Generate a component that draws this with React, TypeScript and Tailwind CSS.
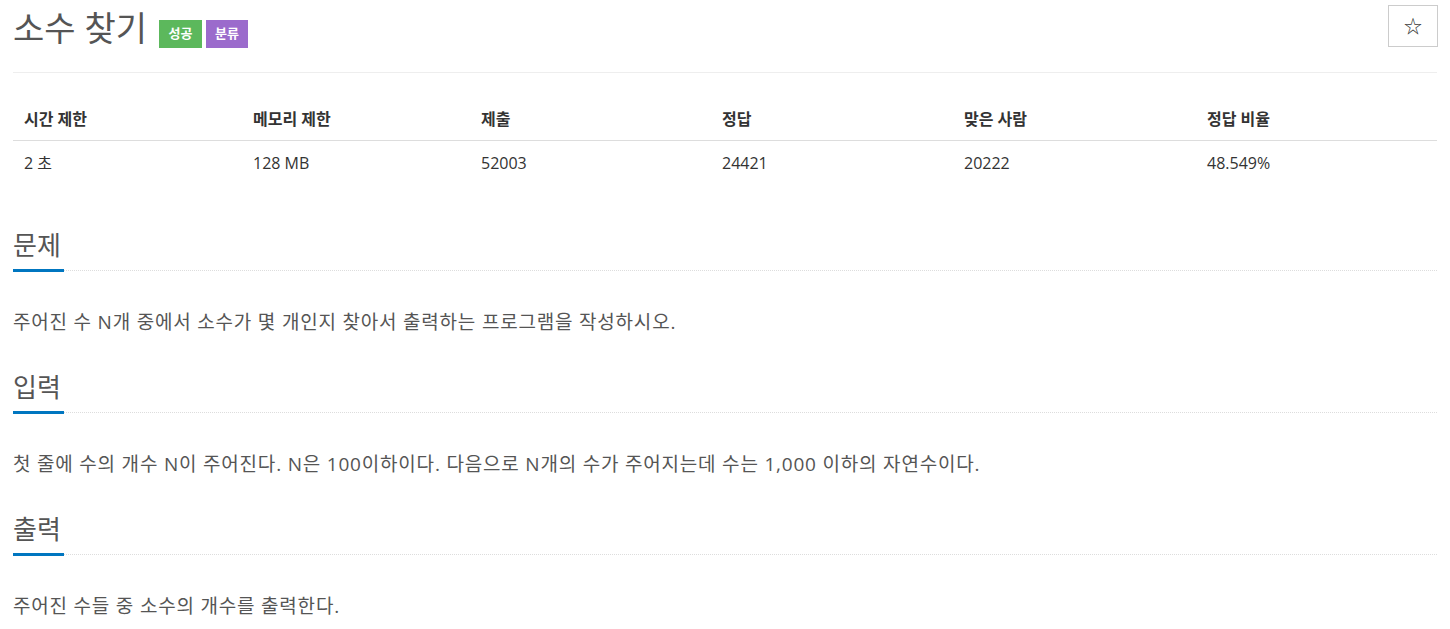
const font = { fontFamily: '"Open Sans", "Noto Sans CJK KR", sans-serif' };

const stats = [
    { label: "시간 제한", value: "2 초" },
    { label: "메모리 제한", value: "128 MB" },
    { label: "제출", value: "52003" },
    { label: "정답", value: "24421" },
    { label: "맞은 사람", value: "20222" },
    { label: "정답 비율", value: "48.549%" },
];

const sections = [
    { title: "문제", body: "주어진 수 N개 중에서 소수가 몇 개인지 찾아서 출력하는 프로그램을 작성하시오." },
    { title: "입력", body: "첫 줄에 수의 개수 N이 주어진다. N은 100이하이다. 다음으로 N개의 수가 주어지는데 수는 1,000 이하의 자연수이다." },
    { title: "출력", body: "주어진 수들 중 소수의 개수를 출력한다." },
];

function SectionHeading({ title }: { title: string }) {
    return (
        <div className="flex items-end">
            <h2 className="text-[26px] leading-[30px] text-[#555] pb-[9px] pr-[3px] border-b-[3px] border-[#0076c0]">
                {title}
            </h2>
            <div className="flex-1 border-b border-dotted border-[#ddd] mb-[1px]" />
        </div>
    );
}

export default function App() {
    return (
        <div className="bg-white min-h-[629px] px-[13px] text-[#555]" style={font}>
            <div className="flex items-start justify-between h-[48px]">
                <div className="flex items-start pt-[8px]">
                    <h1 className="text-[34px] leading-[40px] text-[#555]">소수 찾기</h1>
                    <span className="ml-[12px] mt-[12px] h-[28px] w-[43px] flex items-center justify-center bg-[#5cb85c] text-white text-[13px] font-bold">
                        성공
                    </span>
                    <span className="ml-[4px] mt-[12px] h-[28px] w-[42px] flex items-center justify-center bg-[#9b6bcc] text-white text-[13px] font-bold">
                        분류
                    </span>
                </div>
                <button className="mt-[5px] mr-[-1px] w-[50px] h-[42px] border border-[#ccc] bg-white text-[#333] text-[18px] flex items-center justify-center">
                    ☆
                </button>
            </div>

            <div className="mt-[24px] border-t border-[#eee]" />

            <div className="mt-[24px] grid grid-cols-[229px_228px_241px_242px_243px_1fr] text-[#333]">
                {stats.map((s) => (
                    <div key={s.label} className="h-[44px] flex items-center pl-[11px] border-b border-[#ddd] text-[16px] font-bold">
                        {s.label}
                    </div>
                ))}
                {stats.map((s) => (
                    <div key={s.value} className="h-[44px] flex items-center pl-[11px] text-[16px]">
                        {s.value}
                    </div>
                ))}
            </div>

            <div className="mt-[45px] flex flex-col gap-[38px]">
                {sections.map((sec) => (
                    <div key={sec.title} className="flex flex-col gap-[38px]">
                        <SectionHeading title={sec.title} />
                        <p className="text-[19px] leading-[24px] tracking-[0.8px] text-[#555]">{sec.body}</p>
                    </div>
                ))}
            </div>
        </div>
    );
}
